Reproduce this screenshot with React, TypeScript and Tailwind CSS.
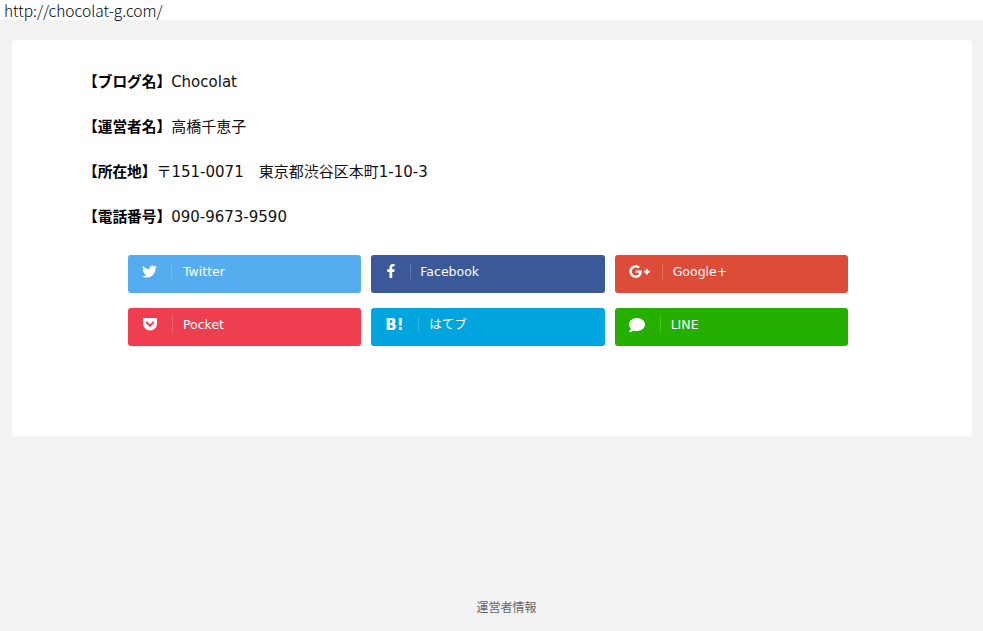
import React from "react";
import { FaTwitter, FaFacebookF, FaGooglePlusG, FaGetPocket, FaComment } from "react-icons/fa";

const rows: [string, string][] = [
  ["【ブログ名】", "Chocolat"],
  ["【運営者名】", "高橋千恵子"],
  ["【所在地】", "〒151-0071　東京都渋谷区本町1-10-3"],
  ["【電話番号】", "090-9673-9590"],
];

function Btn({ bg, icon, label, pl, iconW, tl }: { bg: string; icon: React.ReactNode; label: string; pl: string; iconW: string; tl: string }) {
  return (
    <div className={`h-[38px] rounded-[3px] text-white flex items-center ${bg} ${pl}`}>
      <span className={`flex items-center ${iconW}`}>{icon}</span>
      <span className={`border-l border-white/20 h-[16px] -mt-[6px] ${tl} flex items-center pt-[2px] text-[12.5px] leading-[18px]`}>{label}</span>
    </div>
  );
}

export default function App() {
  return (
    <div className="min-h-[631px] bg-[#f2f2f2] flex flex-col font-['DejaVu_Sans','Noto_Sans_CJK_JP',sans-serif] text-black">
      <div className="h-[20px] bg-white pl-[4px] text-[15.5px] leading-[20px] font-['Noto_Sans_CJK_JP',sans-serif] font-light">http://chocolat-g.com/</div>
      <div className="ml-[12px] w-[960px] mt-[20px] h-[396px] bg-white rounded-[4px] pt-[28px]">
        <div className="pl-[71px] flex flex-col gap-[18px]">
          {rows.map(([k, v]) => (
            <p key={k} className="h-[27px] leading-[27px] text-[15px] flex">
              <b className="font-bold text-[14.7px]">{k}</b>
              <span className="font-normal text-[#111] relative top-[1px]">{v}</span>
            </p>
          ))}
        </div>
        <div className="mt-[25px] ml-[116px] w-[720px] flex flex-col gap-[15px]">
          <div className="grid grid-cols-3 gap-[10px]">
            <Btn bg="bg-[#55acee]" pl="pl-[14px]" iconW="w-[29px]" tl="pl-[11px]" label="Twitter" icon={<FaTwitter className="text-[15px] -mt-[6px]" />} />
            <Btn bg="bg-[#3b5998]" pl="pl-[13px]" iconW="w-[26px]" tl="pl-[9px]" label="Facebook" icon={<FaFacebookF className="text-[14px] -mt-[6px]" />} />
            <Btn bg="bg-[#dd4b39]" pl="pl-[14px]" iconW="w-[33px]" tl="pl-[10px]" label="Google+" icon={<FaGooglePlusG className="text-[21px] -mt-[6px]" />} />
          </div>
          <div className="grid grid-cols-3 gap-[10px]">
            <Btn bg="bg-[#f03e51]" pl="pl-[14px]" iconW="w-[30px]" tl="pl-[10px]" label="Pocket" icon={<FaGetPocket className="text-[16px] -mt-[6px]" />} />
            <Btn bg="bg-[#00a4de]" pl="pl-[15px]" iconW="w-[32px]" tl="pl-[10px]" label="はてブ" icon={<span className="text-[15px] leading-[16px] font-bold -mt-[4px] -ml-[1px]">B!</span>} />
            <Btn bg="bg-[#25af00]" pl="pl-[14px]" iconW="w-[31px]" tl="pl-[10px]" label="LINE" icon={<FaComment className="text-[16px] -mt-[4px]" />} />
          </div>
        </div>
      </div>
      <div className="mt-[162px] h-[20px] pl-[30px] text-center text-[12px] leading-[20px] text-[#666]">運営者情報</div>
    </div>
  );
}
